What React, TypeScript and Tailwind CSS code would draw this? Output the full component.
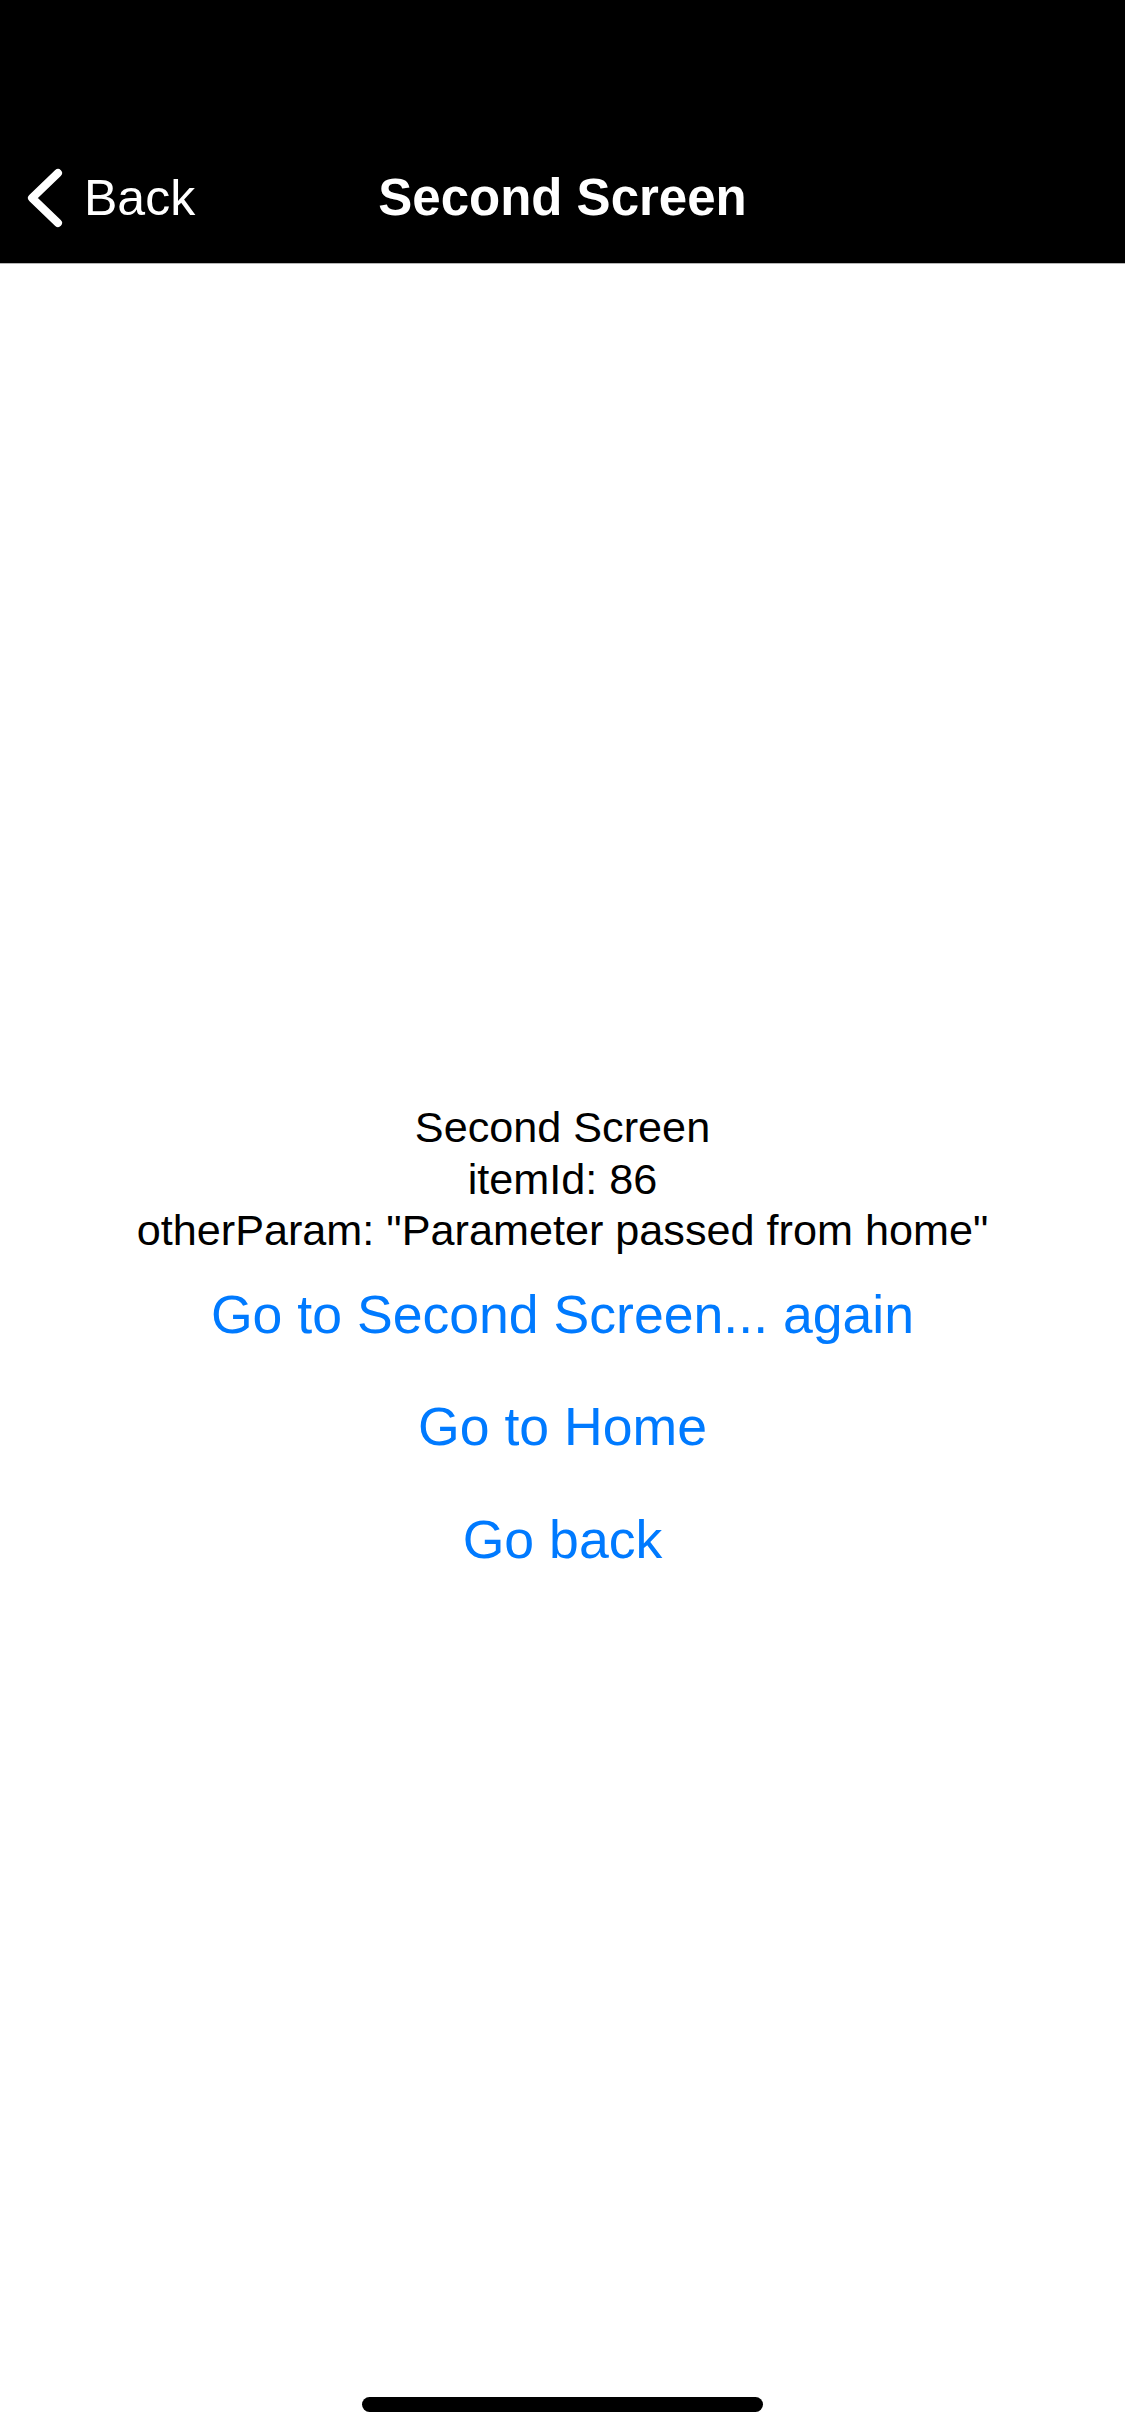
const font = "font-['Liberation_Sans',Arial,sans-serif]"

function NavHeader() {
  return (
    <header className="h-[264px] w-full border-b border-[#b5b5b5] bg-black pt-[132px]">
      <div className="grid h-[131px] grid-cols-[1fr_auto_1fr] items-center">
        <button className="flex items-center gap-[20px] pl-[24px] text-white">
          <svg width="40" height="66" viewBox="0 0 40 66" fill="none">
            <path d="M34 8 L8 33 L34 58" stroke="white" strokeWidth="8" strokeLinecap="round" strokeLinejoin="round" />
          </svg>
          <span className={`${font} text-[50px] leading-none`}>Back</span>
        </button>
        <h1 className={`${font} text-[51px] font-bold leading-none text-white`}>Second Screen</h1>
        <div />
      </div>
    </header>
  )
}

export default function App() {
  const itemId = 86
  const otherParam = "Parameter passed from home"
  const links = ["Go to Second Screen... again", "Go to Home", "Go back"]

  return (
    <div className="flex h-[2436px] w-full flex-col bg-white">
      <NavHeader />
      <main className={`${font} flex flex-1 flex-col items-center pt-[838px]`}>
        <div className="flex flex-col items-center text-[43.2px] leading-[51.5px] text-black">
          <p>Second Screen</p>
          <p>itemId: {itemId}</p>
          <p>otherParam: {JSON.stringify(otherParam)}</p>
        </div>
        <div className="mt-[2px] flex flex-col items-center">
          {links.map((label) => (
            <button key={label} className="flex h-[112.5px] items-center text-[53.6px] leading-none text-[#007aff]">
              {label}
            </button>
          ))}
        </div>
      </main>
      <div className="flex justify-center pb-[24px]">
        <div className="h-[15px] w-[401px] rounded-full bg-black" />
      </div>
    </div>
  )
}
